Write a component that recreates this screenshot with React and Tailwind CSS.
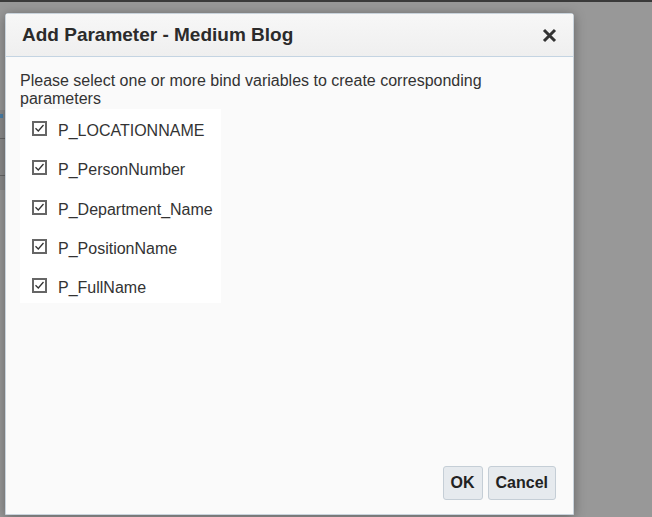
import { useState } from "react"

const params = ["P_LOCATIONNAME", "P_PersonNumber", "P_Department_Name", "P_PositionName", "P_FullName"]

function Check({ checked, onToggle }) {
  return (
    <button
      type="button"
      onClick={onToggle}
      className="grid size-[15px] shrink-0 place-items-center border-2 border-[#666] bg-white"
    >
      {checked && (
        <svg width="11" height="11" viewBox="0 0 11 11" fill="none">
          <path d="M1.5 5.2 L4.3 8 L9.5 2" stroke="#333" strokeWidth="1.3" />
        </svg>
      )}
    </button>
  )
}

export default function App() {
  const [checked, setChecked] = useState(params.map(() => true))

  return (
    <div
      className="relative h-[517px] w-[652px] overflow-hidden bg-[#989898] text-[#333]"
      style={{ fontFamily: '"Liberation Sans", Arial, sans-serif' }}
    >
      <div className="h-[2px] bg-[#3a3a3a]" />
      <div className="absolute left-0 top-[110px] h-[80px] w-[6px] bg-[#8a8a8a]">
        <div className="mt-[4px] h-[4px] w-[3px] bg-[#4a7fa8]" />
        <div className="mt-[20px] h-px bg-[#666]" />
        <div className="mt-[36px] h-px bg-[#666]" />
      </div>

      <div className="absolute left-[5px] top-[13px] flex h-[502px] w-[569px] flex-col rounded-t-[3px] border border-[#c9d3dc] bg-[#fafafa] shadow-[0_2px_12px_rgba(0,0,0,0.35)]">
        <div className="flex h-[43px] items-center justify-between border-b border-[#c4d4e2] bg-gradient-to-b from-[#f7f7f7] to-[#efefef] pl-[16px] pr-[15px]">
          <h1 className="text-[19px] font-bold text-[#2b2b2b]">Add Parameter - Medium Blog</h1>
          <button type="button" className="grid size-[18px] place-items-center">
            <svg width="15" height="15" viewBox="0 0 15 15">
              <path d="M2 2 L13 13 M13 2 L2 13" stroke="#333" strokeWidth="3" />
            </svg>
          </button>
        </div>

        <div className="flex flex-1 flex-col px-[14px] pt-[15px]">
          <p className="text-[16px] leading-[18px]">
            Please select one or more bind variables to create corresponding parameters
          </p>
          <div className="mt-px flex w-[201px] flex-col gap-[21.25px] bg-white pb-[7px] pt-[12px]">
            {params.map((p, i) => (
              <label key={p} className="flex h-[18px] items-start gap-[11px] pl-[12px] text-[16px] leading-[18px] text-[#333]">
                <Check
                  checked={checked[i]}
                  onToggle={() => setChecked((c) => c.map((v, j) => (j === i ? !v : v)))}
                />
                <span className="mt-px">{p}</span>
              </label>
            ))}
          </div>

          <div className="mt-auto mb-[14px] flex justify-end gap-[5px] pr-[3px]">
            <button
              type="button"
              className="h-[34px] rounded-[3px] border border-[#c5ced6] bg-[#e6eaee] px-[7px] text-[16px] font-bold text-[#222]"
            >
              OK
            </button>
            <button
              type="button"
              className="h-[34px] rounded-[3px] border border-[#c5ced6] bg-[#e6eaee] px-[7px] text-[16px] font-bold text-[#222]"
            >
              Cancel
            </button>
          </div>
        </div>
      </div>
    </div>
  )
}
